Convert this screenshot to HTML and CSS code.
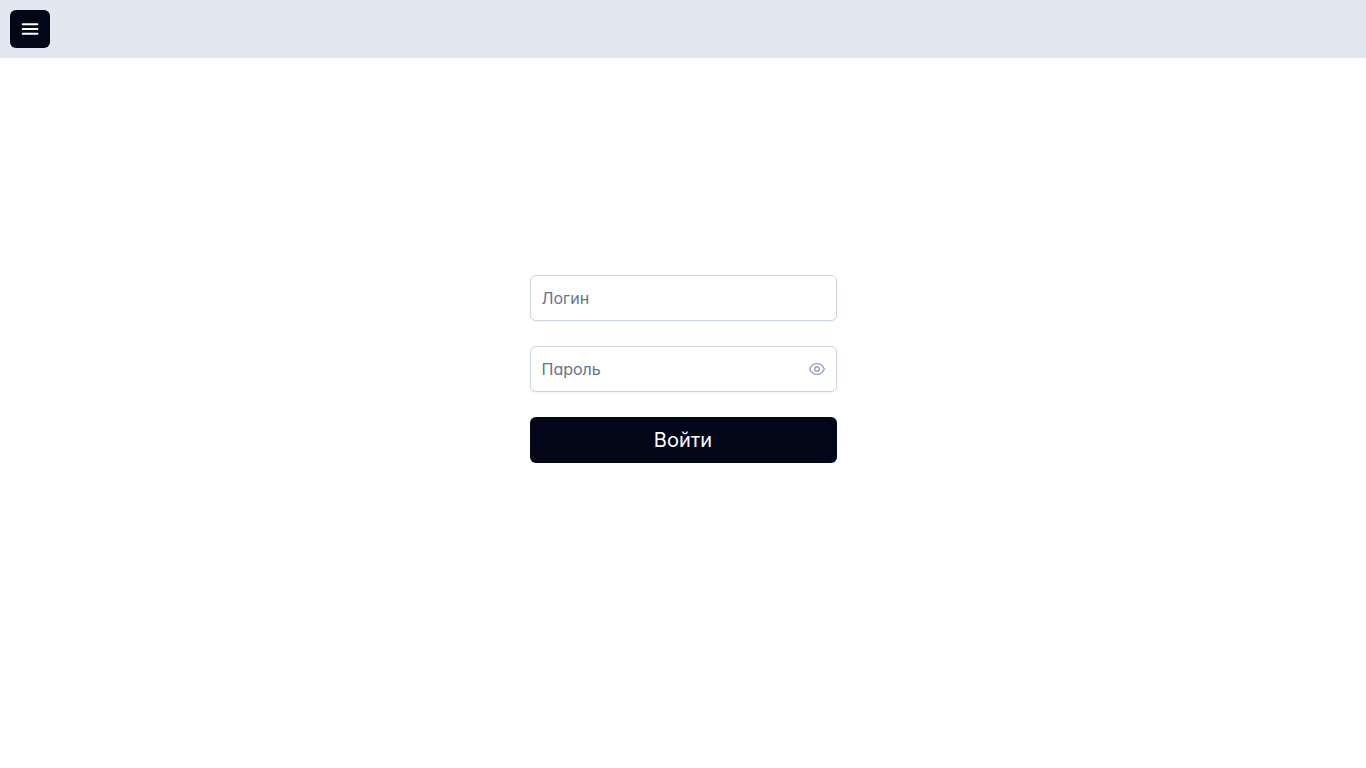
FILE: index.html
```
<!DOCTYPE html>
<html lang="ru">
<head>
    <meta charset="UTF-8">
    <meta name="viewport" content="width=device-width, initial-scale=1.0">
    <title>Вход</title>
    <link rel="stylesheet" href="styles.css">
</head>
<body>

    <header class="header">
        <button class="menu-button" type="button" aria-label="Меню">
            <svg width="18" height="18" viewBox="0 0 18 18" fill="none" stroke="currentColor" stroke-width="1.9" stroke-linecap="round">
                <path d="M1.7 4.2H16.5M1.7 9H16.5M1.7 13.8H16.5"/>
            </svg>
        </button>
    </header>

    <main class="page">
        <form class="login-form">
            <div class="field">
                <input class="field-input" type="text" name="login" placeholder="Логин" aria-label="Логин">
            </div>
            <div class="field">
                <input class="field-input password-input" type="password" name="password" placeholder="Пароль" aria-label="Пароль">
                <button class="eye-button" type="button" aria-label="Показать пароль">
                    <svg width="16" height="16" viewBox="0 0 14 14" fill="none" stroke="currentColor" stroke-width="1.25">
                        <path d="M0.6 7C1.8 4.3 4.1 2.3 7 2.3C9.9 2.3 12.2 4.3 13.4 7C12.2 9.7 9.9 11.7 7 11.7C4.1 11.7 1.8 9.7 0.6 7Z"/>
                        <circle cx="7" cy="7" r="2"/>
                    </svg>
                </button>
            </div>
            <button class="submit-button" type="submit">Войти</button>
        </form>
    </main>

</body>
</html>
```

FILE: styles.css
```
* {
    box-sizing: border-box;
}

body {
    margin: 0;
    min-height: 100vh;
    display: flex;
    flex-direction: column;
    font-family: Inter, sans-serif;
    font-feature-settings: "cv02", "cv03", "cv04", "cv11";
    background-color: #ffffff;
}

button,
input {
    font-family: inherit;
    font-feature-settings: inherit;
}

.header {
    display: flex;
    padding: 10px;
    background-color: #e2e8f0;
}

.menu-button {
    display: flex;
    align-items: center;
    justify-content: center;
    width: 40px;
    height: 38px;
    padding: 0;
    color: #ffffff;
    background-color: #020617;
    border: none;
    border-radius: 6px;
    cursor: pointer;
}

.page {
    flex: 1;
    display: flex;
    align-items: center;
    justify-content: center;
    padding: 0 16px 88px;
}

.login-form {
    display: flex;
    flex-direction: column;
    gap: 25px;
    width: 100%;
    max-width: 307px;
}

.field {
    position: relative;
}

.field-input {
    display: block;
    width: 100%;
    height: 46px;
    padding: 0 11px;
    font-size: 16px;
    color: #334155;
    background-color: #ffffff;
    border: 1px solid #cbd5e1;
    border-radius: 6px;
    box-shadow: 0 1px 2px rgba(18, 18, 23, 0.05);
    outline: none;
}

.field-input::placeholder {
    color: #64748b;
}

.field-input:focus {
    border-color: #020617;
}

.password-input {
    padding-right: 40px;
}

/* eye icon lies over the right end of the password box */
.eye-button {
    position: absolute;
    top: 0;
    bottom: 0;
    right: 12px;
    display: flex;
    align-items: center;
    padding: 0;
    color: #94a3b8;
    background: none;
    border: none;
    cursor: pointer;
}

.submit-button {
    height: 46px;
    font-size: 20px;
    font-weight: 400;
    color: #ffffff;
    background-color: #020617;
    border: none;
    border-radius: 6px;
    cursor: pointer;
}
```
